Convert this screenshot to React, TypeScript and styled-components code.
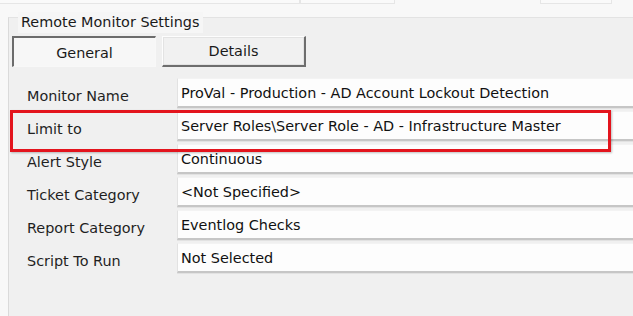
import React from "react";
import styled, { createGlobalStyle } from "styled-components";

const Global = createGlobalStyle`
  html, body { margin: 0; padding: 0; background: #f8f8f8; }
  body { font-family: "DejaVu Sans", Tahoma, sans-serif; color: #1a1a1a; }
  #root { width: 633px; height: 316px; overflow: hidden; }
`;

const Page = styled.div`
  position: relative;
  width: 633px;
  height: 316px;
  background: #f8f8f8;
  overflow: hidden;
`;

const TopStrip = styled.div`
  display: flex;
  height: 4px;
`;

const TopTab = styled.div<{ $w: number; $ml: number }>`
  width: ${(p) => p.$w}px;
  margin-left: ${(p) => p.$ml}px;
  height: 3px;
  border: 1px solid #e6e6e6;
  border-top: none;
  background: #fafafa;
`;

const GroupBox = styled.div`
  position: relative;
  margin-left: 8px;
  margin-top: 13px;
  height: 400px;
  border-left: 1px solid #dadada;
  border-top: 1px solid #e3e3e3;
  background: #f0f0f0;
`;

const GroupTitle = styled.div`
  position: absolute;
  left: 9px;
  top: -6px;
  padding: 0 4px 0 3px;
  height: 21px;
  line-height: 20px;
  font-size: 14.4px;
  background: #f6f6f6;
  color: #1a1a1a;
`;

const Inner = styled.div`
  padding: 18px 0 0 3px;
`;

const TabRow = styled.div`
  display: flex;
  gap: 6px;
`;

const TabButton = styled.div<{ $pressed?: boolean }>`
  box-sizing: border-box;
  width: 144px;
  height: 31px;
  display: flex;
  align-items: center;
  justify-content: center;
  font-size: 14.4px;
  color: #1a1a1a;
  ${(p) =>
    p.$pressed
      ? `
    border-top: 2px solid #6c6c6c;
    border-left: 2px solid #6c6c6c;
    border-right: 1px solid #f8f8f8;
    border-bottom: 1px solid #f8f8f8;
    background-color: #f7f7f7;
    background-image: radial-gradient(#e4e4e4 0.6px, transparent 0.7px);
    background-size: 2px 2px;
    padding-top: 1px;
  `
      : `
    border-top: 1px solid #fdfdfd;
    border-left: 1px solid #fdfdfd;
    border-right: 2px solid #6e6e6e;
    border-bottom: 2px solid #6e6e6e;
    box-shadow: inset 0 0 0 1px #e3e3e3;
    background: #f1f1f1;
  `}
`;

const Form = styled.div`
  position: relative;
  margin-top: 11px;
  display: flex;
  flex-direction: column;
  gap: 3px;
`;

const Row = styled.div`
  display: grid;
  grid-template-columns: 165px 1fr;
  height: 30px;
`;

const Label = styled.div`
  padding-left: 15px;
  padding-top: 10px;
  font-size: 14.4px;
  color: #1f1f1f;
  white-space: nowrap;
`;

const Value = styled.div`
  box-sizing: border-box;
  height: 30px;
  background: #fdfdfd;
  border-left: 1px solid #e2e2e2;
  border-top: 1px solid #f3f3f3;
  border-bottom: 2px solid #c6c6c6;
  box-shadow: 0 1px 0 #e2e2e2;
  padding: 6px 0 0 3px;
  font-size: 14.4px;
  color: #111111;
  white-space: nowrap;
  overflow: hidden;
`;

const Highlight = styled.div`
  position: absolute;
  left: -2px;
  top: 32px;
  width: 601px;
  height: 42px;
  box-sizing: border-box;
  border: 3px solid #e3141d;
  box-shadow: 1px 1px 2px rgba(0, 0, 0, 0.25);
  pointer-events: none;
`;

const rows: [string, string][] = [
  ["Monitor Name", "ProVal - Production - AD Account Lockout Detection"],
  ["Limit to", "Server Roles\\Server Role - AD - Infrastructure Master"],
  ["Alert Style", "Continuous"],
  ["Ticket Category", "<Not Specified>"],
  ["Report Category", "Eventlog Checks"],
  ["Script To Run", "Not Selected"],
];

export default function App() {
  return (
    <Page>
      <Global />
      <TopStrip>
        <TopTab $w={300} $ml={-2} />
        <TopTab $w={93} $ml={0} />
        <TopTab $w={70} $ml={145} />
      </TopStrip>
      <GroupBox>
        <GroupTitle>Remote Monitor Settings</GroupTitle>
        <Inner>
          <TabRow>
            <TabButton $pressed>General</TabButton>
            <TabButton>Details</TabButton>
          </TabRow>
          <Form>
            {rows.map(([l, v]) => (
              <Row key={l}>
                <Label>{l}</Label>
                <Value>{v}</Value>
              </Row>
            ))}
            <Highlight />
          </Form>
        </Inner>
      </GroupBox>
    </Page>
  );
}
